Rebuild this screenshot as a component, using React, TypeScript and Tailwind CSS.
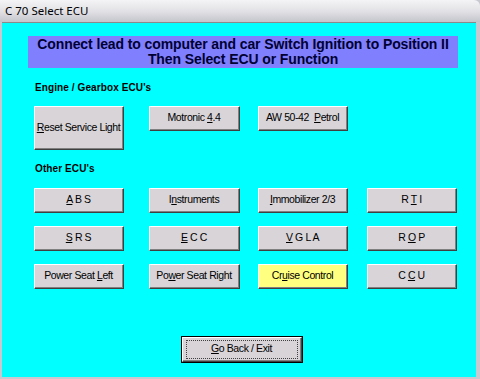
import type { ReactNode } from "react";

function Btn({
  children,
  className = "",
  yellow = false,
}: {
  children: ReactNode;
  className?: string;
  yellow?: boolean;
}) {
  return (
    <div
      className={`flex items-center justify-center border border-t-white border-l-white border-r-[#404040] border-b-[#404040] text-[10.5px] tracking-[-0.4px] text-black ${
        yellow ? "bg-[#ffff80]" : "bg-[#d8d4d8]"
      } ${className}`}
    >
      <div className="flex h-full w-full items-center justify-center border-r border-b border-r-[#808080] border-b-[#808080]">
        <span className="whitespace-pre">{children}</span>
      </div>
    </div>
  );
}

const U = ({ children }: { children: ReactNode }) => <span className="underline underline-offset-1">{children}</span>;

export default function App() {
  return (
    <div
      className="flex h-[379px] w-[480px] flex-col overflow-hidden bg-[#c8c8d0]"
      style={{ fontFamily: '"Liberation Sans", Arial, sans-serif' }}
    >
      {/* title bar */}
      <div className="flex h-[22px] shrink-0 items-center rounded-tr-[6px] bg-gradient-to-b from-[#f4f4f6] via-[#e2e2e6] to-[#c4c4cc] pl-[5px] text-[11.5px] text-black [font-family:'Noto_Sans',sans-serif]">
        C 70 Select ECU
      </div>

      <div className="mb-[2px] ml-[2px] mr-[4px] flex flex-1 flex-col border-t border-t-[#8a8a8a] bg-[#00ffff]">
        <div className="ml-[26px] mt-[13px] flex h-[32px] w-[430px] flex-col items-center justify-center whitespace-nowrap bg-[#8080ff] text-[14px] font-bold leading-[15px] tracking-[-0.1px] text-[#000033]">
          <div>Connect lead to computer and car Switch Ignition to Position II</div>
          <div>Then Select ECU or Function</div>
        </div>

        <div className="ml-[33px] mt-[13px] text-[10px] font-bold leading-[14px] tracking-[0.1px] text-black">
          Engine / Gearbox ECU's
        </div>

        <div className="ml-[32px] mt-[11px] flex items-start">
          <Btn className="h-[44px] w-[90px]">
            <U>R</U>eset Service Light
          </Btn>
          <Btn className="ml-[25px] h-[25px] w-[91px]">
            Motronic <U>4</U>.4
          </Btn>
          <Btn className="ml-[18px] h-[25px] w-[90px]">
            AW 50-42  <U>P</U>etrol
          </Btn>
        </div>

        <div className="ml-[33px] mt-[12px] text-[10px] font-bold leading-[14px] tracking-[0.1px] text-black">
          Other ECU's
        </div>

        <div className="ml-[32px] mt-[12px] grid grid-cols-[115px_109px_109px_90px] gap-y-[13px]">
          <Btn className="h-[25px] w-[90px]">
            <U>A</U> B S
          </Btn>
          <Btn className="h-[25px] w-[91px]">
            I<U>n</U>struments
          </Btn>
          <Btn className="h-[25px] w-[90px]">
            <U>I</U>mmobilizer 2/3
          </Btn>
          <Btn className="h-[25px] w-[90px]">
            R <U>T</U> I
          </Btn>

          <Btn className="h-[25px] w-[90px]">
            <U>S</U> R S
          </Btn>
          <Btn className="h-[25px] w-[91px]">
            <U>E</U> C C
          </Btn>
          <Btn className="h-[25px] w-[90px]">
            <U>V</U> G L A
          </Btn>
          <Btn className="h-[25px] w-[90px]">
            R <U>O</U> P
          </Btn>

          <Btn className="h-[25px] w-[90px]">
            Power Seat <U>L</U>eft
          </Btn>
          <Btn className="h-[25px] w-[91px]">
            Po<U>w</U>er Seat Right
          </Btn>
          <Btn className="h-[25px] w-[90px]" yellow>
            Cr<U>u</U>ise Control
          </Btn>
          <Btn className="h-[25px] w-[90px]">
            C <U>C</U> U
          </Btn>
        </div>

        <div className="ml-[179px] mt-[47px] h-[27px] w-[122px] border border-black">
          <Btn className="h-full w-full">
            <span className="flex h-[19px] w-[112px] items-center justify-center border border-dotted border-[#404040]">
              <U>G</U>o Back / Exit
            </span>
          </Btn>
        </div>
      </div>
    </div>
  );
}
